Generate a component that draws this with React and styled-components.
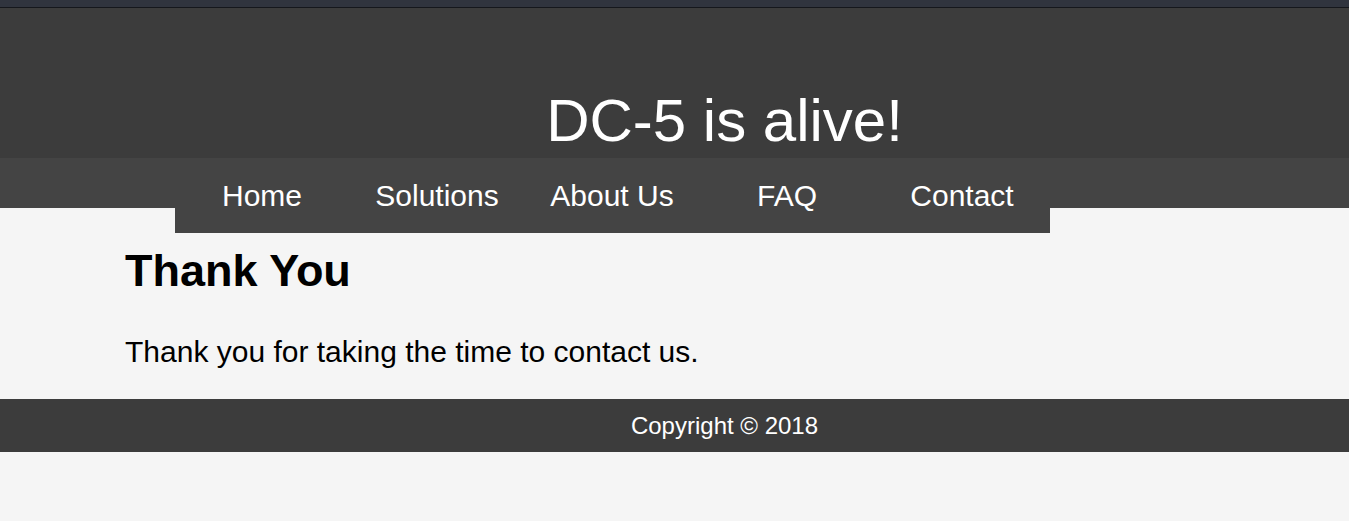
import React from 'react'
import styled, { createGlobalStyle } from 'styled-components'

const links = ['Home', 'Solutions', 'About Us', 'FAQ', 'Contact']

const App = () => {
  return (
    <>
      <GlobalStyle />
      <TopStrip />
      <Header>
        <Title>DC-5 is alive!</Title>
      </Header>
      <NavWrap>
        <NavList>
          {links.map((link) => (
            <NavItem key={link} href="#">{link}</NavItem>
          ))}
        </NavList>
      </NavWrap>
      <Main>
        <Heading>Thank You</Heading>
        <Text>Thank you for taking the time to contact us.</Text>
      </Main>
      <Footer>Copyright © 2018</Footer>
    </>
  )
}

const GlobalStyle = createGlobalStyle`
  html, body {
    margin: 0;
    padding: 0;
    background: #f5f5f5;
    font-family: "Liberation Sans", Arial, sans-serif;
  }
`

const TopStrip = styled.div`
  height: 7px;
  background: #30343e;
  border-bottom: 1px solid #15171c;
`

const Header = styled.header`
  height: 150px;
  background: #3c3c3c;
  display: flex;
  align-items: flex-end;
  justify-content: center;
  padding-left: 100px;
  box-sizing: border-box;
  padding-bottom: 7px;
`

const Title = styled.h1`
  margin: 0;
  color: #fff;
  font-size: 60px;
  font-weight: normal;
  line-height: 1;
`

const NavWrap = styled.nav`
  background: linear-gradient(#444444 0 50px, transparent 50px);
`

const NavList = styled.div`
  display: grid;
  grid-template-columns: repeat(5, 175px);
  width: 875px;
  margin-left: 175px;
  background: #444444;
`

const NavItem = styled.a`
  height: 75px;
  line-height: 75px;
  text-align: center;
  color: #fff;
  font-size: 30px;
  text-decoration: none;
  padding-right: 1px;
`

const Main = styled.main`
  padding: 12px 125px 30px;
`

const Heading = styled.h2`
  margin: 0;
  font-size: 45px;
  font-weight: bold;
  line-height: 1.15;
  color: #000;
`

const Text = styled.p`
  margin: 38px 0 0;
  font-size: 30px;
  line-height: 1.15;
  color: #000;
`

const Footer = styled.footer`
  height: 53px;
  line-height: 53px;
  background: #3c3c3c;
  color: #fff;
  font-size: 24px;
  text-align: center;
  padding-left: 100px;
`

export default App
